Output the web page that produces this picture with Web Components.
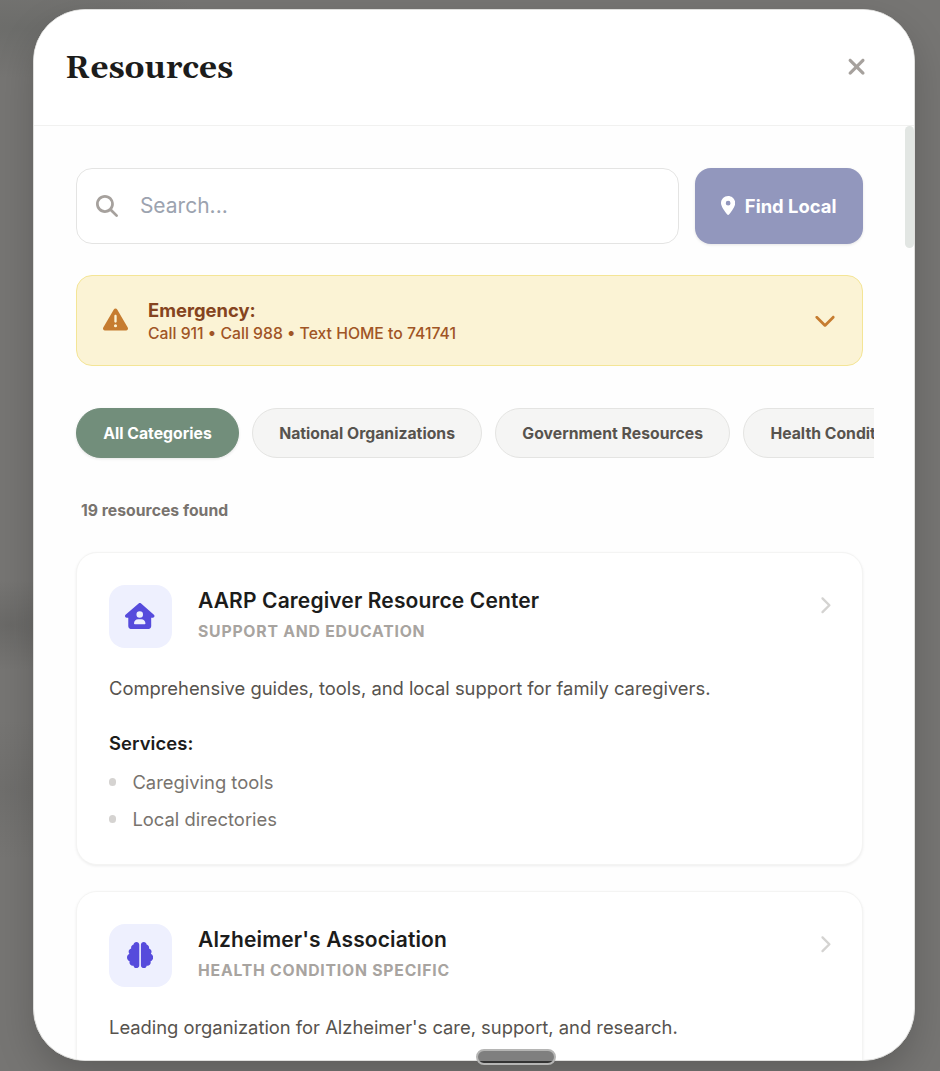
<!DOCTYPE html>
<html lang="en">
<head>
<meta charset="utf-8">
<title>Resources</title>
<style>
html, body { height: 100%; }
body {
  margin: 0; overflow: hidden; font-family: Inter, "Liberation Sans", sans-serif; color: #1c1c1c;
  background:
    radial-gradient(ellipse 110px 45px at 10px 625px, rgba(70,70,68,.25), transparent),
    radial-gradient(ellipse 120px 70px at 10px 790px, rgba(80,80,78,.18), transparent),
    radial-gradient(ellipse 200px 50px at 20px 28px, rgba(90,93,90,.35), transparent),
    #767573;
}
</style>
</head>
<body>
<resources-dialog heading="Resources">
  <search-row></search-row>
  <emergency-banner heading="Emergency:">Call 911 • Call 988 • Text HOME to 741741</emergency-banner>
  <category-bar>
    <category-chip active>All Categories</category-chip>
    <category-chip>National Organizations</category-chip>
    <category-chip>Government Resources</category-chip>
    <category-chip>Health Condition Specific</category-chip>
  </category-bar>
  <result-count>19 resources found</result-count>
  <resource-card icon="house" heading="AARP Caregiver Resource Center" category="SUPPORT AND EDUCATION">
    Comprehensive guides, tools, and local support for family caregivers.
    <service-item slot="services">Caregiving tools</service-item>
    <service-item slot="services">Local directories</service-item>
  </resource-card>
  <resource-card icon="brain" heading="Alzheimer's Association" category="HEALTH CONDITION SPECIFIC">
    Leading organization for Alzheimer's care, support, and research.
  </resource-card>
</resources-dialog>
<drag-handle></drag-handle>

<script>
const define = (name, render) => customElements.define(name, class extends HTMLElement {
  constructor() {
    super();
    this.attachShadow({ mode: "open" });
  }
  connectedCallback() {
    const t = document.createElement("template");
    t.innerHTML = render(this);
    this.shadowRoot.replaceChildren(t.content.cloneNode(true));
  }
});

const ICONS = {
  close: [384, "M342.6 150.6c12.5-12.5 12.5-32.8 0-45.3s-32.8-12.5-45.3 0L192 210.7 86.6 105.4c-12.5-12.5-32.8-12.5-45.3 0s-12.5 32.8 0 45.3L146.7 256 41.4 361.4c-12.5 12.5-12.5 32.8 0 45.3s32.8 12.5 45.3 0L192 301.3 297.4 406.6c12.5 12.5 32.8 12.5 45.3 0s12.5-32.8 0-45.3L237.3 256 342.6 150.6z"],
  search: [512, "M416 208c0 45.9-14.9 88.3-40 122.7L502.6 457.4c12.5 12.5 12.5 32.8 0 45.3s-32.8 12.5-45.3 0L330.7 376c-34.4 25.2-76.8 40-122.7 40C93.1 416 0 322.9 0 208S93.1 0 208 0S416 93.1 416 208zM208 352a144 144 0 1 0 0-288 144 144 0 1 0 0 288z"],
  pin: [384, "M215.7 499.2C267 435 384 279.4 384 192C384 86 298 0 192 0S0 86 0 192c0 87.4 117 243 168.3 307.2c12.3 15.3 35.1 15.3 47.4 0zM192 128a64 64 0 1 1 0 128 64 64 0 1 1 0-128z"],
  warning: [512, "M256 32c14.2 0 27.3 7.5 34.5 19.8l216 368c7.3 12.4 7.3 27.7 .2 40.1S486.3 480 472 480H40c-14.3 0-27.6-7.7-34.7-20.1s-7-27.8 .2-40.1l216-368C228.7 39.5 241.8 32 256 32zm0 128c-13.3 0-24 10.7-24 24V296c0 13.3 10.7 24 24 24s24-10.7 24-24V184c0-13.3-10.7-24-24-24zm32 224a32 32 0 1 0 -64 0 32 32 0 1 0 64 0z"],
  down: [512, "M233.4 406.6c12.5 12.5 32.8 12.5 45.3 0l192-192c12.5-12.5 12.5-32.8 0-45.3s-32.8-12.5-45.3 0L256 338.7 86.6 169.4c-12.5-12.5-32.8-12.5-45.3 0s-12.5 32.8 0 45.3l192 192z"],
  right: [320, "M310.6 233.4c12.5 12.5 12.5 32.8 0 45.3l-192 192c-12.5 12.5-32.8 12.5-45.3 0s-12.5-32.8 0-45.3L242.7 256 73.4 86.6c-12.5-12.5-12.5-32.8 0-45.3s32.8-12.5 45.3 0l192 192z"],
  house: [576, "M575.8 255.5c0 18-15 32.1-32 32.1h-32l.7 160.2c.2 35.5-28.5 64.3-64 64.3H128.1c-35.3 0-64-28.7-64-64V287.6H32c-18 0-32-14-32-32.1c0-9 3-17 10-24L266.4 8c7-7 15-8 22-8s15 2 21 7L564.8 231.5c8 7 12 15 11 24zM352 224a64 64 0 1 0 -128 0 64 64 0 1 0 128 0zm-96 96c-44.2 0-80 35.8-80 80c0 8.8 7.2 16 16 16H384c8.8 0 16-7.2 16-16c0-44.2-35.8-80-80-80H256z"],
  brain: [512, "M184 0c30.9 0 56 25.1 56 56V456c0 30.9-25.1 56-56 56c-28.9 0-52.7-21.9-55.7-50.1c-5.2 1.4-10.7 2.1-16.3 2.1c-35.3 0-64-28.7-64-64c0-7.4 1.3-14.6 3.6-21.2C21.4 367.4 0 338.2 0 304c0-31.9 18.7-59.5 45.8-72.3C37.1 220.8 32 207 32 192c0-30.7 21.6-56.3 50.4-62.6C80.8 123.9 80 118 80 112c0-29.9 20.6-55.1 48.3-62.1C131.3 21.9 155.1 0 184 0zM328 0c28.9 0 52.6 21.9 55.7 49.9c27.8 7 48.3 32.1 48.3 62.1c0 6-.8 11.9-2.4 17.4c28.8 6.2 50.4 31.9 50.4 62.6c0 15-5.1 28.8-13.8 39.7C493.3 244.5 512 272.1 512 304c0 34.2-21.4 63.4-51.6 74.8c2.3 6.6 3.6 13.8 3.6 21.2c0 35.3-28.7 64-64 64c-5.6 0-11.1-.7-16.3-2.1c-3 28.2-26.8 50.1-55.7 50.1c-30.9 0-56-25.1-56-56V56c0-30.9 25.1-56 56-56z"]
};

define("ui-icon", el => {
  const [w, d] = ICONS[el.getAttribute("name")];
  const size = +el.getAttribute("size");
  return `<style>:host{display:block;flex:none}svg{display:block}</style>
  <svg width="${w / 512 * size}" height="${size}" viewBox="0 0 ${w} 512" fill="currentColor"><path d="${d}"/></svg>`;
});

define("resources-dialog", el => `
<style>
:host { display: flex; flex-direction: column; box-sizing: border-box; width: 882px; height: 1052px; margin: 9px 0 0 33px;
  background: #fefefe; border: 1px solid #dfdfdd; border-radius: 52px; overflow: hidden;
  box-shadow: 0 16px 40px -4px rgba(0,0,0,.22); }
header { display: flex; align-items: center; justify-content: space-between; box-sizing: border-box; height: 116px; flex: none;
  padding: 0 48px 1px 31.3px; border-bottom: 1px solid #f1f1f0; background: #fff; }
h1 { margin: 4px 0 0; font: bold 31.5px/44px Gelasio, Georgia, "Liberation Serif", serif; color: #1c1c1b; }
ui-icon { color: #a6a19d; }
.body { display: flex; flex: 1; min-height: 0; }
main { flex: 1; min-width: 0; padding: 42px 42px 0; overflow: hidden; }
.track { width: 9px; flex: none; }
.thumb { height: 122px; border-radius: 5px; background: #e2e6e3; }
</style>
<header><h1>${el.getAttribute("heading")}</h1><ui-icon name="close" size="25.5"></ui-icon></header>
<div class="body"><main><slot></slot></main><div class="track"><div class="thumb"></div></div></div>`);

define("search-row", () => `
<style>
:host { display: flex; gap: 16px; height: 76px; }
.field { flex: 1; display: flex; align-items: center; gap: 21.5px; box-sizing: border-box; padding: 0 0 1px 19.4px;
  background: #fff; border: 1px solid #e4e4e3; border-radius: 16px; font-size: 21px; color: #9ca3af; }
.field ui-icon { color: #a6a19d; }
.button { width: 168px; display: flex; align-items: center; justify-content: center; gap: 10px; border-radius: 16px;
  background: #9297bd; color: #fff; font-size: 18.4px; font-weight: 700; box-shadow: 0 1px 3px rgba(0,0,0,.1); }
.button ui-icon { margin: 0 0 2px -1px; }
</style>
<div class="field"><ui-icon name="search" size="22"></ui-icon><span>Search...</span></div>
<div class="button"><ui-icon name="pin" size="19"></ui-icon><span>Find Local</span></div>`);

define("emergency-banner", el => `
<style>
:host { display: flex; align-items: center; box-sizing: border-box; height: 91px; margin-top: 31px; padding: 0 26px 0 26px;
  background: #fbf3d5; border: 1px solid #f4e596; border-radius: 16px; color: #c67c30; }
ui-icon { margin-bottom: 2px; }
.text { flex: 1; margin-left: 20px; padding-top: 1px; }
.title { font-size: 18.4px; line-height: 24px; font-weight: 700; color: #854420; }
.info { font-size: 15.75px; line-height: 23px; font-weight: 500; color: #a05525; margin-bottom: -1px; }
</style>
<ui-icon name="warning" size="25"></ui-icon>
<div class="text"><div class="title">${el.getAttribute("heading")}</div><div class="info"><slot></slot></div></div>
<ui-icon name="down" size="22"></ui-icon>`);

define("category-bar", () => `
<style>:host { display: flex; gap: 13px; margin: 38px -11px 0 -4px; padding: 4px 0 4px 4px; overflow: hidden; }</style><slot></slot>`);

define("category-chip", () => `
<style>
:host { display: block; flex: none; box-sizing: border-box; height: 50px; padding: 1px 26.2px 0; border: 1px solid #e4e4e2; border-radius: 25px;
  background: #f5f5f4; color: #57534e; font-size: 15.75px; line-height: 48px; font-weight: 700; letter-spacing: .01px; white-space: nowrap; }
:host([active]) { background: #728e7b; border-color: #728e7b; color: #fff; box-shadow: 0 1px 3px rgba(0,0,0,.1); }
</style><slot></slot>`);

define("result-count", () => `
<style>:host { display: block; margin: 37px 0 0 5px; height: 53px; font-size: 15.75px; line-height: 24px; font-weight: 700; letter-spacing: .02px; color: #78736e; }</style><slot></slot>`);

define("resource-card", el => `
<style>
:host { display: block; box-sizing: border-box; height: 313px; margin-bottom: 26px; padding: 32px;
  background: #fff; border: 1px solid #f4f4f3; border-radius: 21px; box-shadow: 0 1px 3px rgba(0,0,0,.07); }
.head { display: flex; align-items: flex-start; height: 63px; }
.tile { display: grid; place-items: center; width: 63px; height: 63px; border-radius: 16px; background: #eef0fe; color: #564bdc; }
.tile ui-icon { margin: 0 1px 1px 0; }
.names { flex: 1; margin: 1px 0 0 26px; }
.name { font-size: 21px; line-height: 30px; font-weight: 600; letter-spacing: .13px; color: #1c1c1b; }
.cat { margin-top: 4px; font-size: 15.75px; line-height: 24px; font-weight: 700; letter-spacing: .78px; color: #a8a4a0; }
.go { margin: 11px -1px 0 0; color: #d4d3d1; }
.desc { margin-top: 25px; font-size: 18.4px; letter-spacing: -.02px; line-height: 30px; color: #57534e; }
.services { display: ${el.querySelector('[slot=services]') ? "block" : "none"}; margin-top: 26px; }
.label { font-size: 18.4px; line-height: 28px; font-weight: 600; letter-spacing: .1px; margin-bottom: 6px; color: #1c1c1b; }
</style>
<div class="head">
  <div class="tile"><ui-icon name="${el.getAttribute("icon")}" size="26.2"></ui-icon></div>
  <div class="names"><div class="name">${el.getAttribute("heading")}</div><div class="cat">${el.getAttribute("category")}</div></div>
  <ui-icon class="go" name="right" size="18.5"></ui-icon>
</div>
<div class="desc"><slot></slot></div>
<div class="services"><div class="label">Services:</div><slot name="services"></slot></div>`);

define("service-item", () => `
<style>
:host { display: flex; align-items: center; gap: 16.4px; height: 37px; font-size: 18.4px; line-height: 28px; color: #78736e; }
i { width: 7px; height: 8px; border-radius: 4px; background: #d5d3d1; }
</style><i></i><span><slot></slot></span>`);

define("drag-handle", () => `
<style>
:host { position: absolute; left: 476px; top: 1049px; box-sizing: border-box; width: 80px; height: 16px; border: 2px solid #b5b5b4;
  border-radius: 8px; background: linear-gradient(#7f7f7f 10px, #333 10px); }
</style>`);
</script>
</body>
</html>
